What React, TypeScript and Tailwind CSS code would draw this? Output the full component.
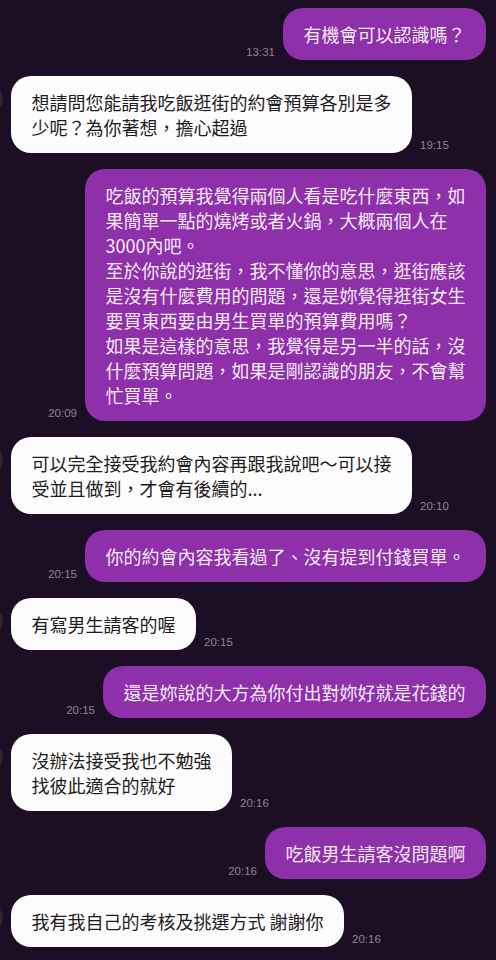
const messages: { me: boolean; time: string; lines: string[] }[] = [
  { me: true, time: "13:31", lines: ["有機會可以認識嗎？"] },
  { me: false, time: "19:15", lines: ["想請問您能請我吃飯逛街的約會預算各別是多", "少呢？為你著想，擔心超過"] },
  {
    me: true,
    time: "20:09",
    lines: [
      "吃飯的預算我覺得兩個人看是吃什麼東西，如",
      "果簡單一點的燒烤或者火鍋，大概兩個人在",
      "3000內吧。",
      "至於你說的逛街，我不懂你的意思，逛街應該",
      "是沒有什麼費用的問題，還是妳覺得逛街女生",
      "要買東西要由男生買單的預算費用嗎？",
      "如果是這樣的意思，我覺得是另一半的話，沒",
      "什麼預算問題，如果是剛認識的朋友，不會幫",
      "忙買單。",
    ],
  },
  { me: false, time: "20:10", lines: ["可以完全接受我約會內容再跟我說吧～可以接", "受並且做到，才會有後續的..."] },
  { me: true, time: "20:15", lines: ["你的約會內容我看過了、沒有提到付錢買單。"] },
  { me: false, time: "20:15", lines: ["有寫男生請客的喔"] },
  { me: true, time: "20:15", lines: ["還是妳說的大方為你付出對妳好就是花錢的"] },
  { me: false, time: "20:16", lines: ["沒辦法接受我也不勉強", "找彼此適合的就好"] },
  { me: true, time: "20:16", lines: ["吃飯男生請客沒問題啊"] },
  { me: false, time: "20:16", lines: ["我有我自己的考核及挑選方式 謝謝你"] },
];

function Bubble({ me, lines }: { me: boolean; lines: string[] }) {
  return (
    <div
      className={
        me
          ? "rounded-[20px] bg-[#8d30a9] px-[20.5px] py-[13.5px] text-[18px] leading-[25px] text-[#f6eaf8] whitespace-nowrap"
          : "rounded-[20px] bg-[#fdfcfd] px-[20.5px] py-[13.5px] text-[18px] leading-[25px] text-[#1e1c20] whitespace-nowrap"
      }
    >
      {lines.map((l, i) => (
        <div key={i}>{l}</div>
      ))}
    </div>
  );
}

function Time({ t }: { t: string }) {
  return (
    <span className="mb-[2px] text-[11.5px] leading-none text-[#8b8691] font-['Liberation_Sans',Arial,sans-serif]">
      {t}
    </span>
  );
}

export default function App() {
  return (
    <div className="min-h-screen bg-[#1b0e25] pt-2 pb-4 pr-[10px] font-['Noto_Sans_CJK_TC','Noto_Sans',sans-serif] overflow-hidden">
      <div className="flex flex-col gap-4">
        {messages.map((m, idx) =>
          m.me ? (
            <div key={idx} className="flex items-end justify-end gap-2">
              <Time t={m.time} />
              <Bubble me lines={m.lines} />
            </div>
          ) : (
            <div key={idx} className="flex items-end gap-2">
              <div className="-ml-[25px] mb-auto mt-[9px] h-7 w-7 shrink-0 rounded-full bg-[#2e2630]" />
              <Bubble me={false} lines={m.lines} />
              <Time t={m.time} />
            </div>
          )
        )}
      </div>
    </div>
  );
}
